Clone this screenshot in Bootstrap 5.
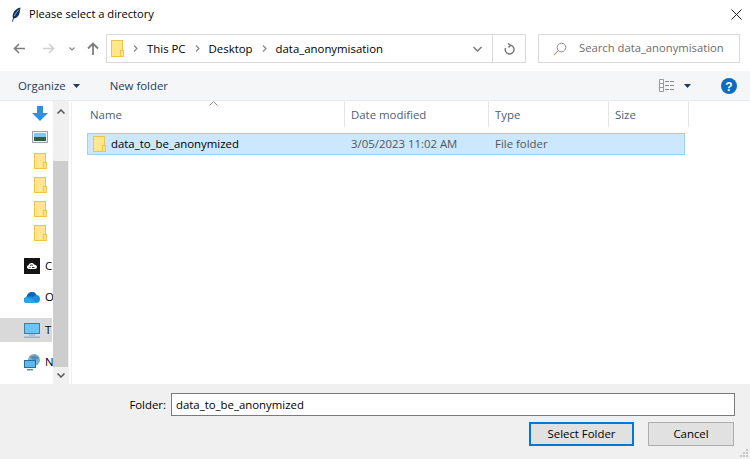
<!DOCTYPE html>
<html lang="en">
<head>
  <meta charset="UTF-8">
  <title>Please select a directory</title>
  <link href="https://cdn.jsdelivr.net/npm/bootstrap@5.3.3/dist/css/bootstrap.min.css" rel="stylesheet">
  <style>
    html, body { height: 459px; overflow: hidden; }
    body { width: 750px; font-family: "Open Sans", "Liberation Sans", sans-serif; font-size: 11.4px; color: #000; background: #fff; }
    .title-bar { height: 28px; padding-left: 11px; }
    .title-bar .title-text { margin-left: 8px; font-size: 11.15px; }
    .close-x { margin-left: auto; margin-right: 8px; }
    .nav-bar { height: 43px; padding: 6px 10px 8px 13px; }
    .nav-btns { width: 93px; }
    .addr-box { width: 420px; height: 29px; border: 1px solid #d9d9d9; }
    .addr-path { flex: 1; padding-left: 4px; gap: 9px; }
    .addr-refresh { width: 33px; height: 100%; border-left: 1px solid #d9d9d9; }
    .addr-drop { margin-right: 10px; }
    .search-box { width: 202px; height: 29px; margin-left: auto; border: 1px solid #d9d9d9; color: #6d6d6d; padding-left: 14px; gap: 12px; font-size: 11.25px; }
    .tool-bar { height: 30px; background: #f5f6f7; border-bottom: 1px solid #ececec; padding: 0 13px 0 18px; color: #1c3a5e; }
    .tool-caret { margin-left: 7px; }
    .tool-new { margin-left: 30px; }
    .tool-right { margin-left: auto; }
    .view-caret { margin-left: 9px; }
    .help-icon { margin-left: 30px; }
    .main-area { height: 283px; }
    .side-pane { width: 53px; overflow: hidden; }
    .side-row { height: 24px; white-space: nowrap; padding-left: 32px; }
    .side-row.folder-row { padding-left: 34px; }
    .side-row.lvl0 { padding-left: 24px; }
    .side-row.lvl0 span { margin-left: 5px; }
    .side-row.gap-cc { margin-top: 9px; }
    .side-row.gap-od { margin-top: 7px; }
    .side-row.gap-pc { margin-top: 9px; }
    .side-row.gap-net { margin-top: 8px; }
    .side-row.active { background: #d9d9d9; width: 52px; }
    .side-scroll { width: 16px; background: #f0f0f0; }
    .scroll-btn { height: 17px; }
    .scroll-btn.top-btn { height: 20px; }
    .scroll-track { height: 40px; }
    .scroll-thumb { flex: 1; background: #cdcdcd; width: 15px; }
    .pane-gap { width: 2px; }
    .pane-line { width: 1px; background: #f0f0f0; }
    .file-pane { flex: 1; position: relative; padding-left: 15px; }
    .col-heads { height: 26px; color: #4c607a; margin-left: -15px; }
    .col-head { height: 26px; padding-left: 18px; border-right: 1px solid #e5e5e5; line-height: 28px; }
    .col-name { width: 273px; }
    .col-date { width: 144px; padding-left: 6px; }
    .col-type { width: 120px; padding-left: 6px; }
    .col-size { width: 80px; padding-left: 6px; }
    .sort-mark { position: absolute; left: 137px; top: 0; }
    .file-row { width: 598px; height: 22px; margin-top: 6px; background: #cce8ff; border: 1px solid #99d1ff; }
    .file-name { width: 263px; padding-left: 5px; gap: 5px; display: flex; align-items: center; }
    .file-date { width: 144px; color: #545454; }
    .file-type { color: #545454; }
    .foot-bar { height: 75px; background: #f0f0f0; padding: 9px 15px 0 0; position: relative; }
    .folder-line { height: 23px; }
    .folder-label { width: 171px; text-align: right; padding-right: 5px; }
    .folder-input { flex: 1; height: 23px; border: 1px solid #7a7a7a; border-radius: 0; padding: 0 4px; font-size: 11.4px; color: #000; background: #fff; }
    .folder-input:focus { outline: none; box-shadow: none; border-color: #7a7a7a; }
    .foot-btns { margin-top: 6px; gap: 14px; padding-right: 1px; }
    .win-btn { height: 24px; border-radius: 0; padding: 0; font-size: 11.4px; color: #000; background: #e1e1e1; border: 1px solid #adadad; }
    .win-btn.primary-btn { width: 105px; border: 2px solid #0078d7; }
    .win-btn.cancel-btn { width: 86px; }
    .grip { position: absolute; right: 1px; bottom: 1px; }
  </style>
</head>
<body>

<div class="title-bar d-flex align-items-center">
  <svg width="10" height="15" viewBox="0 0 10 15"><path d="M9.500.5C6 1 3 3.500 2 7c-.5 1.700-.4 3 0 4L1 14.500l.9.300.9-3.300C6 11.300 8 8.500 8.700 5.500c.4-1.800.5-3.500.8-5z" fill="#14305c"/><path d="M8 2.500C6 4.500 4.500 6.500 3.300 9" stroke="#7fb2ea" stroke-width="1" fill="none"/></svg>
  <span class="title-text">Please select a directory</span>
  <svg class="close-x" width="11" height="11" viewBox="0 0 11 11"><path d="M.5.500l10 10M10.500.500l-10 10" stroke="#222" stroke-width="1" fill="none"/></svg>
</div>

<div class="nav-bar d-flex align-items-center">
  <div class="nav-btns d-flex align-items-center">
    <svg width="12" height="11" viewBox="0 0 12 11"><path d="M12 5.500H1.500M6 1L1.500 5.500 6 10" stroke="#7d7d7d" stroke-width="1.600" fill="none"/></svg>
    <svg style="margin-left:18px" width="12" height="11" viewBox="0 0 12 11"><path d="M0 5.500h10.500M6 1l4.500 4.500L6 10" stroke="#d0d0d0" stroke-width="1.600" fill="none"/></svg>
    <svg style="margin-left:14px" width="6" height="4" viewBox="0 0 6 4"><path d="M.5.500L3 3 5.500.5" stroke="#888" stroke-width="1.200" fill="none"/></svg>
    <svg style="margin-left:12px" width="12" height="13" viewBox="0 0 12 13"><path d="M6 13V2M1 6.500L6 1.500l5 5" stroke="#7d7d7d" stroke-width="1.800" fill="none"/></svg>
  </div>
  <div class="addr-box d-flex align-items-center">
    <div class="addr-path d-flex align-items-center">
      <svg width="13" height="17" viewBox="0 0 13 17"><rect x=".5" y=".5" width="11" height="16" fill="#ffe68f" stroke="#eec643"/><rect x="9.500" y="10.500" width="3" height="6" fill="#ffe68f" stroke="#eec643"/></svg>
      <svg width="5" height="7" viewBox="0 0 5 7"><path d="M1 .5l3 3-3 3" stroke="#888" stroke-width="1.200" fill="none"/></svg>
      <span>This PC</span>
      <svg width="5" height="7" viewBox="0 0 5 7"><path d="M1 .5l3 3-3 3" stroke="#888" stroke-width="1.200" fill="none"/></svg>
      <span>Desktop</span>
      <svg width="5" height="7" viewBox="0 0 5 7"><path d="M1 .5l3 3-3 3" stroke="#888" stroke-width="1.200" fill="none"/></svg>
      <span>data_anonymisation</span>
    </div>
    <svg class="addr-drop" width="9" height="6" viewBox="0 0 9 6"><path d="M.5 1l4 4 4-4" stroke="#777" stroke-width="1.400" fill="none"/></svg>
    <div class="addr-refresh d-flex align-items-center justify-content-center">
      <svg width="11" height="12" viewBox="0 0 11 12"><path d="M6.500 2.200A4.400 4.400 0 1 1 1.500 5M4 .5l2.500 1.800L4.500 4.500" stroke="#777" stroke-width="1.400" fill="none"/></svg>
    </div>
  </div>
  <div class="search-box d-flex align-items-center">
    <svg width="14" height="14" viewBox="0 0 14 14"><circle cx="8.500" cy="5.500" r="4.300" stroke="#8a8a8a" fill="none"/><path d="M5.300 8.700L.8 13.200" stroke="#c78b73" stroke-width="1.100"/></svg>
    <span>Search data_anonymisation</span>
  </div>
</div>

<div class="tool-bar d-flex align-items-center">
  <span>Organize</span>
  <svg class="tool-caret" width="7" height="4" viewBox="0 0 7 4"><path d="M0 0h7L3.500 4z" fill="#1c3a5e"/></svg>
  <span class="tool-new">New folder</span>
  <div class="tool-right d-flex align-items-center">
    <svg width="16" height="13" viewBox="0 0 16 13"><path d="M.5.500h4v12h-4zM.5 4.500h4M.5 8.500h4" stroke="#9a9a9a" fill="none"/><path d="M6 2.500h10M6 6.500h10M6 10.500h10" stroke="#8a8a8a" stroke-dasharray="4 1" fill="none"/></svg>
    <svg class="view-caret" width="7" height="4" viewBox="0 0 7 4"><path d="M0 0h7L3.500 4z" fill="#1c3a5e"/></svg>
    <svg class="help-icon" width="16" height="16" viewBox="0 0 16 16"><circle cx="8" cy="8" r="8" fill="#0f6cbd"/><text x="8" y="12.500" text-anchor="middle" font-size="12" font-weight="700" font-family="Liberation Sans" fill="#fff">?</text></svg>
  </div>
</div>

<div class="main-area d-flex">
  <div class="side-pane">
    <div class="side-row d-flex align-items-center">
      <svg width="16" height="15" viewBox="0 0 16 15"><path d="M5 0h6v7h5l-8 8-8-8h5z" fill="#2f8fe8"/></svg>
    </div>
    <div class="side-row d-flex align-items-center">
      <svg width="16" height="12" viewBox="0 0 16 12"><rect x=".5" y=".5" width="15" height="11" fill="#eef3f6" stroke="#a0a0a0"/><rect x="2" y="2" width="12" height="4" fill="#8ac4e8"/><rect x="2" y="6" width="12" height="4" fill="#2c5f48"/></svg>
    </div>
    <div class="side-row folder-row d-flex align-items-center"><svg width="13" height="16" viewBox="0 0 13 16"><rect x=".5" y=".5" width="11" height="15" fill="#ffe68f" stroke="#eec643"/><rect x="9.500" y="9.500" width="3" height="6" fill="#ffe68f" stroke="#eec643"/></svg></div>
    <div class="side-row folder-row d-flex align-items-center"><svg width="13" height="16" viewBox="0 0 13 16"><rect x=".5" y=".5" width="11" height="15" fill="#ffe68f" stroke="#eec643"/><rect x="9.500" y="9.500" width="3" height="6" fill="#ffe68f" stroke="#eec643"/></svg></div>
    <div class="side-row folder-row d-flex align-items-center"><svg width="13" height="16" viewBox="0 0 13 16"><rect x=".5" y=".5" width="11" height="15" fill="#ffe68f" stroke="#eec643"/><rect x="9.500" y="9.500" width="3" height="6" fill="#ffe68f" stroke="#eec643"/></svg></div>
    <div class="side-row folder-row d-flex align-items-center"><svg width="13" height="16" viewBox="0 0 13 16"><rect x=".5" y=".5" width="11" height="15" fill="#ffe68f" stroke="#eec643"/><rect x="9.500" y="9.500" width="3" height="6" fill="#ffe68f" stroke="#eec643"/></svg></div>
    <div class="side-row lvl0 gap-cc d-flex align-items-center">
      <svg class="flex-shrink-0" width="16" height="16" viewBox="0 0 16 16"><rect width="16" height="16" fill="#141414"/><path d="M3 9c0-1 .7-1.700 1.600-1.800C5 5.700 6.300 5 7.500 5c1.300 0 2.300.6 3 1.800 1.500 0 2.500 1 2.500 2.200 0 1.300-1 2-2.300 2H5c-1.200 0-2-.9-2-2z" fill="#fff"/><path d="M6 7.500c1-.6 2-.6 3 0M5.500 9.500h1M8 9.500h2.500" stroke="#141414" stroke-width=".9" fill="none"/></svg>
      <span>C</span>
    </div>
    <div class="side-row lvl0 gap-od d-flex align-items-center">
      <svg class="flex-shrink-0" width="16" height="11" viewBox="0 0 16 11"><path d="M3 11a3 3 0 0 1-.5-6C3 2 5.500 0 8 0c2 0 3.500 1 4.500 3 2 0 3.500 1.500 3.500 4 0 2.500-1.500 4-3.500 4z" fill="#1490df"/><path d="M3 11a3 3 0 0 1-.8-5.800L6 6.500l7.500 4.500z" fill="#28a8ea"/><path d="M2.500 5C3 2 5.500 0 8 0c2 0 3.500 1 4.500 3-1.700 0-3 .7-3.700 2-1.800-1-4-1-6.300 0z" fill="#0364b8"/></svg>
      <span>O</span>
    </div>
    <div class="side-row lvl0 active gap-pc d-flex align-items-center">
      <svg class="flex-shrink-0" width="16" height="15" viewBox="0 0 16 15"><rect x=".5" y=".5" width="15" height="10" fill="#6cc4f5" stroke="#3d7ea6"/><rect x="5" y="11.500" width="6" height="1" fill="#8fa8bd"/><rect y="13.500" width="16" height="1.500" fill="#9ab0c4"/></svg>
      <span>T</span>
    </div>
    <div class="side-row lvl0 gap-net d-flex align-items-center">
      <svg class="flex-shrink-0" width="16" height="17" viewBox="0 0 16 17"><circle cx="10" cy="6" r="6" fill="#7fb0c8"/><path d="M6 2c2 1 3.500 0 5-1 1 1.500 3 2 4 3-1 1.500-3 1-4 2-2 0-4-1-5-4z" fill="#4d8fb3"/><rect x=".5" y="6.500" width="11" height="7" fill="#5cb8ee" stroke="#2f6c94"/><rect x="3" y="15" width="6" height="1.500" fill="#5f8fb0"/></svg>
      <span>N</span>
    </div>
  </div>

  <div class="side-scroll d-flex flex-column">
    <div class="scroll-btn top-btn d-flex align-items-center justify-content-center"><svg width="8" height="5" viewBox="0 0 8 5"><path d="M.5 4.500L4 1l3.500 3.500" stroke="#555" stroke-width="1.500" fill="none"/></svg></div>
    <div class="scroll-track"></div>
    <div class="scroll-thumb"></div>
    <div class="scroll-btn d-flex align-items-center justify-content-center"><svg width="8" height="5" viewBox="0 0 8 5"><path d="M.5.500L4 4 7.500.5" stroke="#555" stroke-width="1.500" fill="none"/></svg></div>
  </div>
  <div class="pane-gap"></div>
  <div class="pane-line"></div>

  <div class="file-pane">
    <svg class="sort-mark" width="9" height="5" viewBox="0 0 9 5"><path d="M.5 4.500l4-4 4 4" stroke="#8a8a8a" fill="none"/></svg>
    <div class="col-heads d-flex">
      <div class="col-head col-name">Name</div>
      <div class="col-head col-date">Date modified</div>
      <div class="col-head col-type">Type</div>
      <div class="col-head col-size">Size</div>
    </div>
    <div class="file-row d-flex align-items-center">
      <div class="file-name">
        <svg width="13" height="16" viewBox="0 0 13 16"><rect x=".5" y=".5" width="11" height="15" fill="#ffe68f" stroke="#eec643"/><rect x="9.500" y="9.500" width="3" height="6" fill="#ffe68f" stroke="#eec643"/></svg>
        <span>data_to_be_anonymized</span>
      </div>
      <div class="file-date">3/05/2023 11:02 AM</div>
      <div class="file-type">File folder</div>
    </div>
  </div>
</div>

<div class="foot-bar">
  <div class="folder-line d-flex align-items-center">
    <label class="folder-label" for="folderName">Folder:</label>
    <input id="folderName" class="form-control folder-input" type="text" value="data_to_be_anonymized">
  </div>
  <div class="foot-btns d-flex justify-content-end">
    <button type="button" class="btn win-btn primary-btn">Select Folder</button>
    <button type="button" class="btn win-btn cancel-btn">Cancel</button>
  </div>
  <svg class="grip" width="9" height="9" viewBox="0 0 9 9"><path d="M6 0h2v2H6zM3 3h2v2H3zM6 3h2v2H6zM0 6h2v2H0zM3 6h2v2H3zM6 6h2v2H6z" fill="#c4c4c4"/></svg>
</div>

<script src="https://cdn.jsdelivr.net/npm/bootstrap@5.3.3/dist/js/bootstrap.bundle.min.js"></script>
</body>
</html>
